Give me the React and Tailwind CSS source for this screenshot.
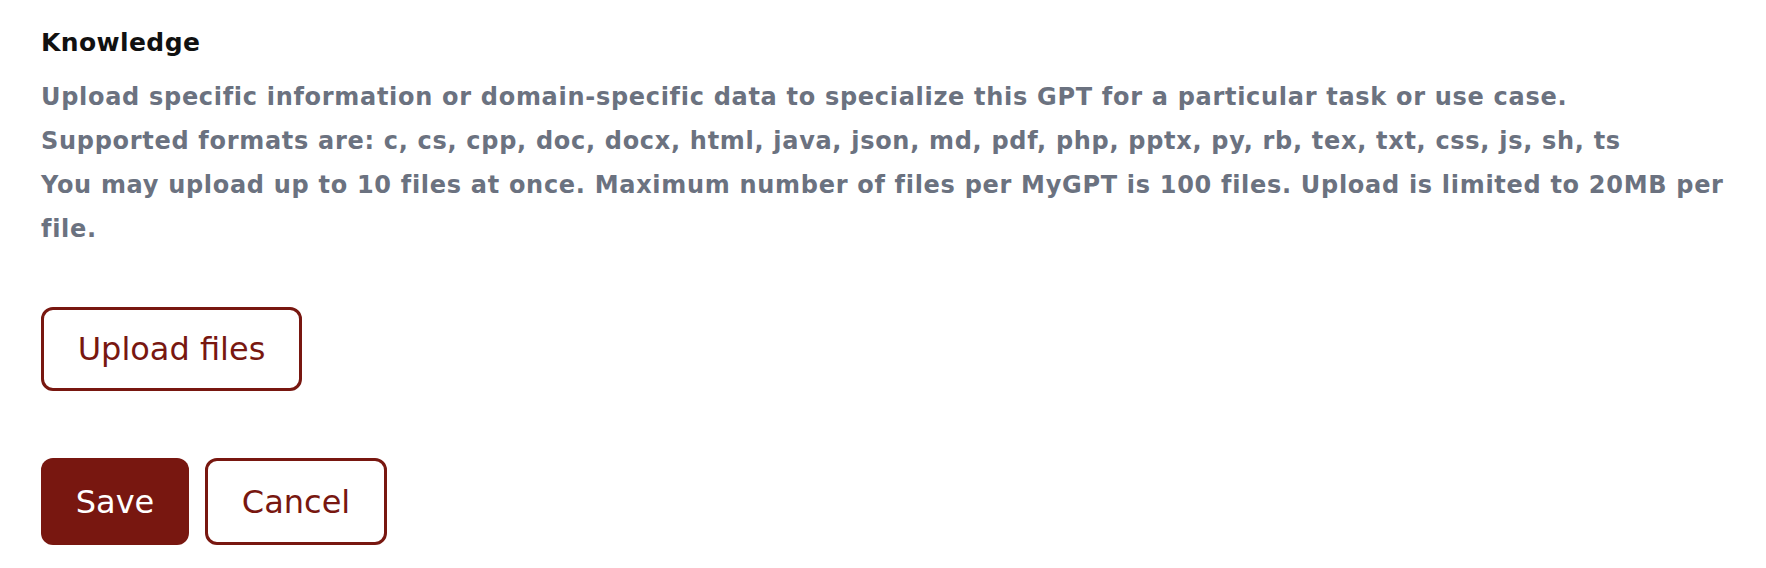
const FONT = "font-['DejaVu_Sans',sans-serif]";

function OutlineButton({ children, className = "" }) {
  return (
    <button
      type="button"
      className={`flex items-center justify-center rounded-xl border-[3px] border-[#781710] bg-white text-[32px] font-normal text-[#781710] ${className}`}
    >
      {children}
    </button>
  );
}

export default function App() {
  return (
    <div className={`min-h-screen bg-white pt-[27px] pl-[41px] pr-[20px] ${FONT}`}>
      <h2 className="text-[25px] font-bold leading-[32px] tracking-[0.4px] text-[#111]">Knowledge</h2>

      <div className="mt-4 text-[24px] font-bold leading-[44px] tracking-[0.7px] text-[#6b7280]">
        <p>Upload specific information or domain-specific data to specialize this GPT for a particular task or use case.</p>
        <p>Supported formats are: c, cs, cpp, doc, docx, html, java, json, md, pdf, php, pptx, py, rb, tex, txt, css, js, sh, ts</p>
        <p>
          You may upload up to 10 files at once. Maximum number of files per MyGPT is 100 files. Upload is limited to
          20MB per file.
        </p>
      </div>

      <div className="mt-[56px]">
        <OutlineButton className="h-[84px] w-[261px]">Upload files</OutlineButton>
      </div>

      <div className="mt-[67px] flex gap-4">
        <button
          type="button"
          className="flex h-[87px] w-[148px] items-center justify-center rounded-xl bg-[#781710] text-[32px] font-normal text-white"
        >
          Save
        </button>
        <OutlineButton className="h-[87px] w-[182px]">Cancel</OutlineButton>
      </div>
    </div>
  );
}
